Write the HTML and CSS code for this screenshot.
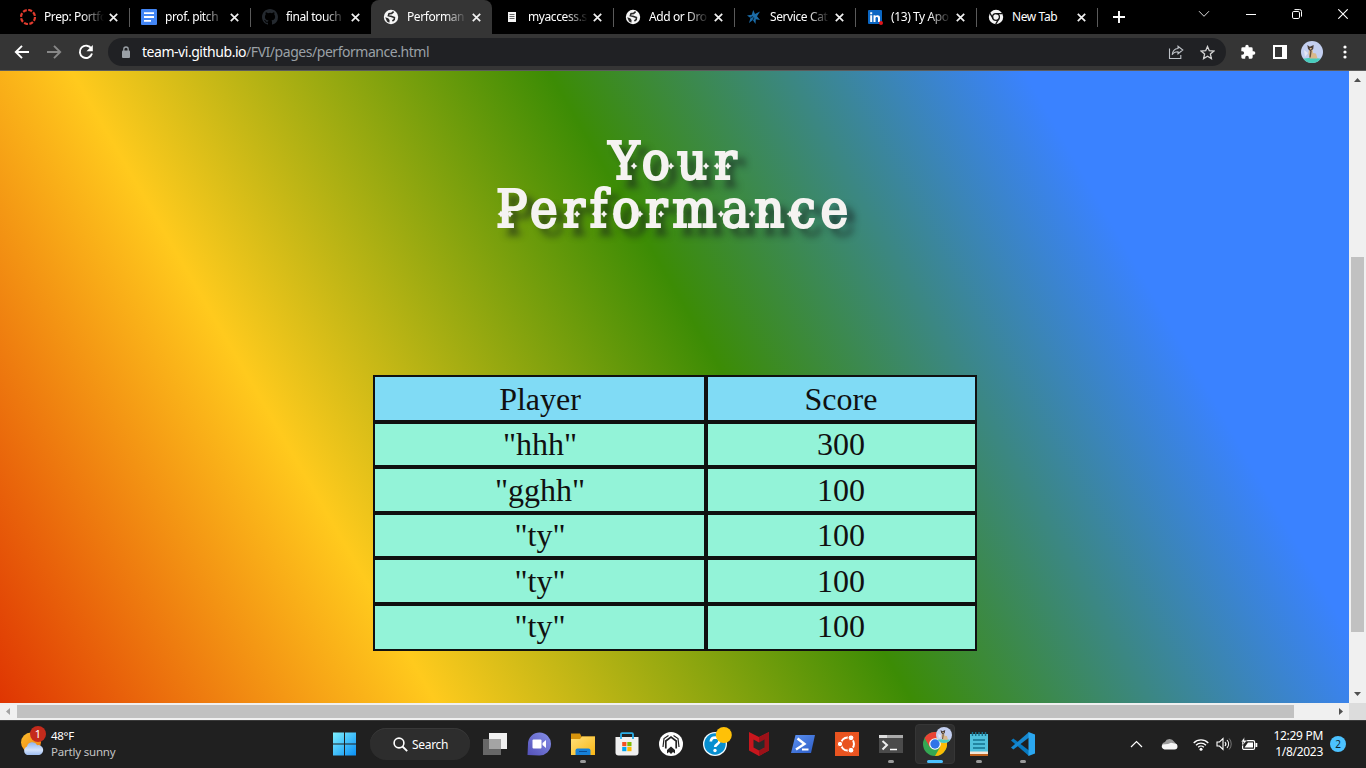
FILE: index.html
```html
<!DOCTYPE html>
<html lang="en">
<head>
<meta charset="utf-8">
<title>Performance</title>
<link rel="stylesheet" href="styles.css">
</head>
<body>
<svg class="defs" width="0" height="0">
  <defs>
    <linearGradient id="win" x1="0" y1="0" x2="1" y2="1"><stop offset="0" stop-color="#7df0fe"/><stop offset="1" stop-color="#0a8ff5"/></linearGradient>
    <linearGradient id="sun" x1="0" y1="0" x2="1" y2="1"><stop offset="0" stop-color="#fbc02d"/><stop offset="1" stop-color="#ef7a10"/></linearGradient>
    <linearGradient id="cloud" x1="0" y1="0" x2="0" y2="1"><stop offset="0" stop-color="#8fb4ee"/><stop offset=".6" stop-color="#d4e3fb"/><stop offset="1" stop-color="#9dbdf0"/></linearGradient>
    <linearGradient id="folder" x1="0" y1="0" x2="1" y2="1"><stop offset="0" stop-color="#ffe07a"/><stop offset="1" stop-color="#f9b615"/></linearGradient>
    <linearGradient id="chat" x1="1" y1="0" x2="0" y2="1"><stop offset="0" stop-color="#8690e8"/><stop offset="1" stop-color="#5350b8"/></linearGradient>
    <linearGradient id="ps" x1="0" y1="0" x2="1" y2="1"><stop offset="0" stop-color="#5d92f2"/><stop offset="1" stop-color="#2b5bc4"/></linearGradient>
    <symbol id="x" viewBox="0 0 9 9"><path d="M.8.8 8.2 8.2M8.2.8.8 8.2" stroke="#f1f1f1" stroke-width="1.7" fill="none"/></symbol>
    <symbol id="globe" viewBox="0 0 16 16"><circle cx="8" cy="8" r="7.2" fill="#f5f5f5"/><path d="M2.2 8.2 5.2 9.2 6.6 11 6.4 13.8 4 12.5Z" fill="#2a2a2a"/><path d="M10.6 2.6 8.6 4.4 6 4.8 5.4 6.6 8.6 7.4 11.4 8.6 11.2 10.6 9.4 12" stroke="#2a2a2a" stroke-width="1.6" fill="none"/></symbol>
    <symbol id="kanga" viewBox="0 0 22 22"><clipPath id="av"><circle cx="11" cy="11" r="11"/></clipPath><g clip-path="url(#av)"><path d="M0 0h22v22H0z" fill="#c3cff0"/><path d="M0 18 11 16.5 22 18v4H0z" fill="#48cdbd"/><path d="M3 9l4 3-3 4z" fill="#e4e8f5"/><path d="M8 8.5 11.5 8.5 12 12 15 12.5 16.5 17.5H9L7.5 13z" fill="#d9b98a"/><path d="M10 10 9 16.5" stroke="#68513e" stroke-width="1.4"/><path d="M6.3 4 8.8 5.7 12.7 4 12.2 8 9.6 10.2 7 8z" fill="#493e3a"/><path d="M8.5 7h2.5L9.8 9z" fill="#d8b98e"/></g></symbol>
    <path id="spur" d="M-3.500 0Q-1.200-.8 0-3.500 1.200-.8 3.500 0 1.200.8 0 3.500-1.200.8-3.500 0z"/>
  </defs>
</svg>

<header class="tabstrip">
  <div class="tab"><svg class="fav" viewBox="0 0 16 16"><circle cx="8" cy="8" r="7" fill="none" stroke="#e23b2e" stroke-width="2.2" stroke-dasharray="4 1.5"/></svg><span class="title">Prep: Portfo</span><svg class="close"><use href="#x"/></svg></div>
  <div class="tab"><svg class="fav" viewBox="0 0 16 16"><rect width="16" height="16" rx="1" fill="#4285f4"/><path d="M3 4.2h10M3 8h10M3 11.8h7" stroke="#fff" stroke-width="1.8"/></svg><span class="title">prof. pitch</span><svg class="close"><use href="#x"/></svg></div>
  <div class="tab no-sep"><svg class="fav" viewBox="0 0 16 16"><path fill="#24292f" d="M8 0C3.58 0 0 3.58 0 8c0 3.54 2.29 6.53 5.47 7.59.4.07.55-.17.55-.38 0-.19-.01-.82-.01-1.49-2.01.37-2.53-.49-2.69-.94-.09-.23-.48-.94-.82-1.13-.28-.15-.68-.52-.01-.53.63-.01 1.08.58 1.23.82.72 1.21 1.87.87 2.33.66.07-.52.28-.87.51-1.07-1.78-.2-3.64-.89-3.64-3.95 0-.87.31-1.59.82-2.15-.08-.2-.36-1.02.08-2.12 0 0 .67-.21 2.2.82a7.6 7.6 0 0 1 4 0c1.53-1.04 2.2-.82 2.2-.82.44 1.1.16 1.92.08 2.12.51.56.82 1.27.82 2.15 0 3.07-1.87 3.75-3.65 3.95.29.25.54.73.54 1.48 0 1.07-.01 1.93-.01 2.2 0 .21.15.46.55.38A8.01 8.01 0 0 0 16 8c0-4.42-3.58-8-8-8z"/></svg><span class="title">final touch</span><svg class="close"><use href="#x"/></svg></div>
  <div class="tab active no-sep"><svg class="fav"><use href="#globe"/></svg><span class="title">Performan</span><svg class="close"><use href="#x"/></svg></div>
  <div class="tab"><svg class="fav" viewBox="0 0 16 16"><path d="M4 3h8v10H4z" fill="#f4f4f4"/><path d="M5.5 5.5h5M5.5 7.5h5M5.5 9.5h5" stroke="#555" stroke-width=".9"/></svg><span class="title">myaccess.s</span><svg class="close"><use href="#x"/></svg></div>
  <div class="tab"><svg class="fav"><use href="#globe"/></svg><span class="title">Add or Dro</span><svg class="close"><use href="#x"/></svg></div>
  <div class="tab"><svg class="fav" viewBox="0 0 16 16"><path fill="#1b6ca8" d="M7.200 1 9 5 14 2.500 11 7.300 14 11 9.800 10.300 9.500 15 6.800 11 3 14 4.500 9 1 6.500 5.800 5.800z"/><path d="M7 7.500 4.500 8.700M8 8.500 7 11" stroke="#062b47" stroke-width="1.200"/></svg><span class="title">Service Cat</span><svg class="close"><use href="#x"/></svg></div>
  <div class="tab"><svg class="fav" viewBox="0 0 16 16"><rect x="1" y="1" width="14" height="14" rx="1" fill="#0a66c2"/><path d="M3.2 6.3h2V13h-2zM3.2 3.2h2v2h-2zM6.5 6.3h2v1c1-1.6 4.5-1.6 4.5 1.4V13h-2V9.4c0-2-2.5-2-2.5 0V13h-2z" fill="#fff"/><circle cx="14" cy="14" r="2" fill="#e0151b"/></svg><span class="title">(13) Ty Apo</span><svg class="close"><use href="#x"/></svg></div>
  <div class="tab"><svg class="fav" viewBox="0 0 16 16"><circle cx="8" cy="8" r="7.2" fill="#f5f5f5"/><circle cx="8" cy="8" r="3.4" fill="none" stroke="#111" stroke-width="1.3"/><path d="M8 4.6h6.3M5.1 9.7 1.9 4.2M10.9 9.7 7.7 15.2" stroke="#111" stroke-width="1.3"/></svg><span class="title">New Tab</span><svg class="close"><use href="#x"/></svg></div>
  <svg class="newtab" viewBox="0 0 12 12"><path d="M6 0v12M0 6h12" stroke="#fff" stroke-width="1.9"/></svg>
  <div class="winbtns">
    <svg width="12" height="8" viewBox="0 0 12 8"><path d="M1 1.2 6 6.3 11 1.2" stroke="#ddd" fill="none"/></svg>
    <svg width="10" height="10" viewBox="0 0 10 10"><path d="M0 5.5h10" stroke="#fff"/></svg>
    <svg width="10" height="10" viewBox="0 0 10 10"><rect x=".5" y="2.5" width="7" height="7" rx="1.3" stroke="#fff" fill="none"/><path d="M2.5.6h5.2q1.8 0 1.8 1.8v5.2" stroke="#fff" fill="none"/></svg>
    <svg width="10" height="10" viewBox="0 0 10 10"><path d="m.3.3 9.4 9.4M9.7.3.3 9.7" stroke="#fff" stroke-width="1.1"/></svg>
  </div>
</header>

<nav class="toolbar">
  <div class="navicons">
    <svg width="16" height="16" viewBox="0 0 16 16"><path d="M15 8H2.5M8 1.8 1.8 8 8 14.2" stroke="#fff" stroke-width="1.9" fill="none"/></svg>
    <svg width="16" height="16" viewBox="0 0 16 16"><path d="M1 8h12.5M8 1.8 14.2 8 8 14.2" stroke="#888" stroke-width="1.9" fill="none"/></svg>
    <svg width="16" height="16" viewBox="0 0 16 16"><path d="M13.4 4.7A6.2 6.2 0 1 0 14 9.6" stroke="#fff" stroke-width="1.9" fill="none"/><path d="M14.8 1v6.3H8.5z" fill="#fff"/></svg>
  </div>
  <div class="omnibox">
    <svg width="10" height="13" viewBox="0 0 10 13"><rect x="1" y="4.5" width="8" height="7.5" rx="1" fill="#9aa0a6"/><path d="M2.8 5V3.2a2.2 2.2 0 0 1 4.4 0V5" stroke="#9aa0a6" stroke-width="1.3" fill="none"/></svg>
    <span class="url"><b>team-vi.github.io</b>/FVI/pages/performance.html</span>
    <svg class="share" width="16" height="14" viewBox="0 0 16 14"><path d="M1.5 3.5v10h11.3V10M10 1.2 14.8 5 10 8.8V6.7C7.2 6.6 5.3 7.8 4.2 9.8c.3-3.5 2.4-6 5.8-6.3z" stroke="#bdc1c6" stroke-width="1.1" fill="none"/></svg>
    <svg width="15" height="15" viewBox="0 0 15 15"><path d="m7.5 1.5 1.8 4.2 4.6.4-3.5 3 1 4.5-3.9-2.4-3.9 2.4 1-4.5-3.5-3 4.6-.4z" stroke="#d5d5d5" stroke-width="1.3" fill="none"/></svg>
  </div>
  <svg class="puzzle" width="16" height="16" viewBox="0 0 24 24"><path fill="#fff" d="M20.5 11H19V7a2 2 0 0 0-2-2h-4V3.500a2.500 2.500 0 0 0-5 0V5H4a2 2 0 0 0-2 2v3.800h1.500a2.700 2.700 0 0 1 0 5.400H2V20a2 2 0 0 0 2 2h3.800v-1.500a2.700 2.700 0 0 1 5.400 0V22H17a2 2 0 0 0 2-2v-4h1.500a2.500 2.500 0 0 0 0-5z"/></svg>
  <svg class="panel" width="14" height="14" viewBox="0 0 14 14"><path fill="#fff" fill-rule="evenodd" d="M0 0h14v14H0zM2 2v10h7V2z"/></svg>
  <svg class="avatar" width="22" height="22"><use href="#kanga"/></svg>
  <svg class="dots" width="4" height="14" viewBox="0 0 4 14"><circle cx="2" cy="2" r="1.6" fill="#fff"/><circle cx="2" cy="7" r="1.6" fill="#fff"/><circle cx="2" cy="12" r="1.6" fill="#fff"/></svg>
</nav>

<main class="viewport">
  <section class="page">
    <h1><span class="your">Your</span><br>Performance
      <svg class="spurs" width="370" height="110" viewBox="0 0 370 110"><g fill="#f5f3f1">
        <use href="#spur" x="132" y="35"/><use href="#spur" x="144" y="35"/><use href="#spur" x="157" y="35"/><use href="#spur" x="181" y="35"/><use href="#spur" x="193" y="35"/><use href="#spur" x="216" y="35"/><use href="#spur" x="227" y="35"/><use href="#spur" x="238" y="35"/>
        <use href="#spur" x="11" y="83"/><use href="#spur" x="20" y="83"/><use href="#spur" x="45" y="83"/><use href="#spur" x="77" y="83"/><use href="#spur" x="87" y="83"/><use href="#spur" x="105" y="83"/><use href="#spur" x="114" y="83"/><use href="#spur" x="126" y="83"/><use href="#spur" x="150" y="83"/><use href="#spur" x="162" y="83"/><use href="#spur" x="171" y="83"/><use href="#spur" x="190" y="83"/><use href="#spur" x="231" y="83"/><use href="#spur" x="262" y="83"/><use href="#spur" x="275" y="83"/><use href="#spur" x="300" y="83"/><use href="#spur" x="309" y="83"/><use href="#spur" x="338" y="83"/>
      </g></svg>
    </h1>
    <table>
      <tr class="head"><td class="player">Player</td><td>Score</td></tr>
      <tr class="r45"><td>"hhh"</td><td>300</td></tr>
      <tr class="r46"><td>"gghh"</td><td>100</td></tr>
      <tr class="r45"><td>"ty"</td><td>100</td></tr>
      <tr class="r46"><td>"ty"</td><td>100</td></tr>
      <tr class="r47"><td>"ty"</td><td>100</td></tr>
    </table>
  </section>
  <aside class="vbar">
    <svg width="17" height="17" viewBox="0 0 17 17"><path d="M5 11h7L8.500 7z" fill="#505050"/></svg>
    <div class="vthumb"></div>
    <svg class="end" width="17" height="17" viewBox="0 0 17 17"><path d="M5 6h7l-3.500 4z" fill="#505050"/></svg>
  </aside>
  <div class="hbar">
    <svg width="17" height="17" viewBox="0 0 17 17"><path d="M10 5v7L6 8.500z" fill="#a3a3a3"/></svg>
    <div class="hthumb"></div>
    <svg class="hend" width="17" height="17" viewBox="0 0 17 17"><path d="M7 5v7l4-3.500z" fill="#505050"/></svg>
  </div>
  <div class="corner"></div>
</main>

<footer class="taskbar">
  <div class="weather">
    <svg width="28" height="32" viewBox="0 0 28 32"><circle cx="11" cy="16.500" r="10" fill="url(#sun)"/><path d="M7 29a4.600 4.600 0 0 1 0-8.500 5.500 5.500 0 0 1 10.200-1.300 4.600 4.600 0 0 1 2 9.800z" fill="url(#cloud)"/><circle cx="18" cy="8" r="8" fill="#c42b1c"/></svg>
    <span class="count">1</span>
    <p>48°F<br><span>Partly sunny</span></p>
  </div>
  <svg class="start" width="24" height="24" viewBox="0 0 24 24"><path fill="url(#win)" d="M1 .5h11v11H1zM13 .5h11v11H13zM1 12.500h11v11H1zM13 12.500h11v11H13z"/></svg>
  <div class="search"><svg width="15" height="15" viewBox="0 0 15 15"><circle cx="6" cy="6" r="4.900" stroke="#fff" stroke-width="1.600" fill="none"/><path d="m9.500 9.500 4.700 4.700" stroke="#fff" stroke-width="1.800"/></svg>Search</div>
  <div class="apps">
    <div class="app"><svg viewBox="0 0 24 24"><path d="M6 1h18v16H6z" fill="#f0f0f0"/><path d="M0 7h18v16H0z" fill="#676767"/><path d="M6 7h12v10H6z" fill="#a4a4a4"/></svg></div>
    <div class="app"><svg viewBox="0 0 24 24"><path d="M.5 23 1 12A11.500 11.500 0 1 1 12 23.500z" fill="url(#chat)"/><rect x="5.500" y="7.500" width="9" height="9" rx="1" fill="#fff"/><path d="m15.500 11 3.500-3v8l-3.500-3z" fill="#fff"/></svg></div>
    <div class="app run"><svg viewBox="0 0 24 24"><path d="M0 1.500h9l1.500 3H24v5H0z" fill="#d6930c"/><path d="M0 7h9l2-2.500h13V23H0z" fill="url(#folder)"/><path d="M4.500 23v-4.500q0-2 2-2h11q2 0 2 2V23z" fill="#1680d8"/><path d="M8 19.500h8" stroke="#0a4c94"/></svg></div>
    <div class="app"><svg viewBox="0 0 24 24"><path d="M.5 5h23v15.500q0 3-3 3h-17q-3 0-3-3z" fill="#f0f0f0"/><path d="M6 7V2.200q0-1 1-1h10q1 0 1 1V7" stroke="#2aaee8" stroke-width="1.800" fill="none"/><path d="M7.200 10h4.200v4.200H7.200z" fill="#f25022"/><path d="M12.300 10h4.200v4.200h-4.200z" fill="#7fba00"/><path d="M7.200 15h4.200v4.200H7.200z" fill="#00a4ef"/><path d="M12.300 15h4.200v4.200h-4.200z" fill="#ffb900"/></svg></div>
    <div class="app"><svg viewBox="0 0 24 24"><circle cx="12" cy="12" r="12" fill="#fff"/><path d="M9.500 3.500 5 6.500 4 15M14.500 3.500l4.500 3 1 8.500" stroke="#222" stroke-width="1.200" fill="none"/><path d="M6.800 16.500V9L12 5l5.200 4v7.500" stroke="#222" stroke-width="1.700" fill="none"/><path d="M8 21.500V18l4-3.500 4 3.500v3.500l-2-1.500-2 2-2-2z" fill="#222"/></svg></div>
    <div class="app"><svg class="wide" viewBox="0 0 29 29"><circle cx="12" cy="17" r="12" fill="#f3fbff"/><circle cx="12" cy="17" r="10.700" fill="#078fd0"/><path d="M7.800 14.500q.3-4 4.400-4 4.500.2 4.300 3.500-.1 2-2.500 3.400-1.800 1-1.800 2.600" stroke="#fff" stroke-width="2.700" fill="none"/><circle cx="12" cy="23.500" r="1.700" fill="#fff"/><circle cx="20.800" cy="8" r="8" fill="#ffc107"/></svg></div>
    <div class="app"><svg viewBox="0 0 24 24"><path d="m2 0 10 5 10-5V18.500l-10 5.500L2 18.500z" fill="#c8161d"/><path d="M22 0v18.500L12 24v-5.500l5-2.500V8l-5 2.800V5z" fill="#9c1118"/><path d="m6.500 7.500 5.500 3 5.500-3v8l-5.500 3-5.500-3z" fill="#292929"/></svg></div>
    <div class="app"><svg viewBox="0 0 24 24"><path d="M4.500 3H24l-4 18H0z" fill="url(#ps)"/><path d="m6.500 6.500 7 5.500L5 17.500" stroke="#fff" stroke-width="2.400" fill="none"/><path d="M11 17.500h6.500" stroke="#fff" stroke-width="2"/></svg></div>
    <div class="app"><svg viewBox="0 0 24 24"><path d="M0 0h24v24H0z" fill="#e95420"/><circle cx="12.500" cy="12" r="6.500" fill="none" stroke="#fff" stroke-width="2"/><g fill="#fff" stroke="#e95420"><circle cx="5" cy="12" r="2.700"/><circle cx="16" cy="5.800" r="2.900"/><circle cx="16" cy="18.200" r="2.900"/></g></svg></div>
    <div class="app run"><svg viewBox="0 0 24 24"><path d="M0 3h24v18H0z" fill="#4b4b4b"/><path d="M0 3h24v3H0z" fill="#aaa"/><path d="M0 3h8v3H0z" fill="#ddd"/><path d="m3.500 9 4.500 4-4.500 4.500" stroke="#eee" stroke-width="2" fill="none"/><path d="M11 17.500h7" stroke="#fff" stroke-width="1.500"/></svg></div>
    <div class="app current"><svg viewBox="0 0 24 24"><circle cx="12" cy="12" r="12" fill="#34a853"/><path d="M12 12 1.600 6A12 12 0 0 1 22.400 6z" fill="#ea4335"/><path d="M12 6h10.400A12 12 0 0 1 12 24l5.200-9z" fill="#fbbc05"/><path d="M1.600 6 6.800 15 12 6z" fill="#ea4335"/><circle cx="12" cy="12" r="5.800" fill="#fff"/><circle cx="12" cy="12" r="4.700" fill="#2f75e8"/></svg><svg class="badge"><use href="#kanga"/></svg></div>
    <div class="app run"><svg viewBox="0 0 24 24"><path d="M3 2h18v19H3z" fill="#50c0dc"/><path d="M3 19.500h18V22H3z" fill="#f3e6d8"/><path d="M3 22h18v2H3z" fill="#bd601c"/><path d="M6 8h12M6 12h12M6 16h12" stroke="#14718e" stroke-width="1.400"/><path d="M5.500 0v4M8.700 0v4M12 0v4M15.300 0v4M18.500 0v4" stroke="#176f8b" stroke-width="1.400"/></svg></div>
    <div class="app run"><svg viewBox="0 0 24 24"><path d="M0 8.500 2.300 6.500 18 18.500V24z" fill="#0879bf"/><path d="M0 15.500 2.300 17.500 18 5.500V0z" fill="#1688d0"/><path d="m17.500 0 6.500 2.500v19L17.500 24z" fill="#2ba7f0"/></svg></div>
  </div>
  <div class="tray">
    <svg width="13" height="8" viewBox="0 0 13 8"><path d="m1 7 5.500-5.500L12 7" stroke="#fff" stroke-width="1.200" fill="none"/></svg>
    <svg class="od" width="17" height="12" viewBox="0 0 17 12"><path d="M1 7a3.500 3.500 0 0 1 3-3 5 5 0 0 1 9-.5l3 3.500-8 3z" fill="#9b9b9b"/><path d="M3.500 11.500a3 3 0 0 1-2-5L7 6l3-1.200 3.500.7a3 3 0 0 1 0 6z" fill="#f5f5f5"/></svg>
    <svg class="wifi" width="16" height="13" viewBox="0 0 16 13"><path d="M.7 5a10.300 10.300 0 0 1 14.600 0M3 7.300a7 7 0 0 1 10 0M5.200 9.300a4 4 0 0 1 5.600 0" stroke="#fff" stroke-width="1.300" fill="none"/><circle cx="8" cy="11.200" r="1.500" fill="#fff"/></svg>
    <svg class="vol" width="16" height="14" viewBox="0 0 16 14"><path d="M1 5h2.500l3.500-3.500v11L3.500 9H1z" stroke="#fff" stroke-width="1.100" fill="none"/><path d="M9 5a3 3 0 0 1 0 4M11 3a6 6 0 0 1 0 8" stroke="#fff" stroke-width="1.100" fill="none"/><path d="M13.200 1.500a8.500 8.500 0 0 1 0 11" stroke="#777" fill="none"/></svg>
    <svg class="bat" width="17" height="14" viewBox="0 0 17 14"><rect x="1.600" y="3.600" width="12" height="8.800" rx="1.500" stroke="#fff" stroke-width="1.200" fill="none"/><path d="M3.500 10.500 7 5.500h5v5zM14.500 6h1.800v4h-1.800z" fill="#fff"/><path d="M3.500 0 0 5h2.500L1.500 8.500 6 3.500H3.500z" fill="#fff" stroke="#202020" stroke-width=".5"/></svg>
    <p class="clock">12:29 PM<br>1/8/2023</p>
    <span class="notif">2</span>
  </div>
</footer>
</body>
</html>
```
FILE: styles.css
```css
* { box-sizing: border-box; }
body { margin: 0; width: 1366px; height: 768px; overflow: hidden; display: flex; flex-direction: column; background: #000; font-family: "Noto Sans", "Open Sans", sans-serif; }
svg { display: block; flex: none; }
.defs { position: absolute; }

.tabstrip { display: flex; height: 34px; padding-left: 8px; background: #000; flex: none; }
.tab { position: relative; display: flex; align-items: center; width: 121px; flex: none; padding-left: 12px; color: #fff; font-size: 12px; }
.tab::after { content: ""; position: absolute; right: -1px; top: 8px; width: 1px; height: 19px; background: #5a5a5a; }
.tab.no-sep::after { display: none; }
.tab.active { background: #353535; border-radius: 8px 8px 0 0; }
.fav { width: 16px; height: 16px; }
.title { width: 60px; margin-left: 8px; white-space: nowrap; letter-spacing: -0.4px; line-height: 18px; -webkit-mask-image: linear-gradient(90deg, #000 38px, transparent 60px); mask-image: linear-gradient(90deg, #000 38px, transparent 60px); }
.tab:nth-child(9) .title { -webkit-mask-image: none; mask-image: none; }
.close { width: 9px; height: 9px; margin-left: 5px; }
.newtab { width: 12px; height: 12px; margin: 11px 0 0 16px; }
.winbtns { display: flex; align-items: center; gap: 36px; height: 28px; margin-left: 73px; }

.toolbar { display: flex; align-items: center; height: 37px; flex: none; background: #353535; border-bottom: 1px solid #5c5c5c; padding-left: 14px; }
.navicons { display: flex; gap: 16px; width: 94px; }
.omnibox { display: flex; align-items: center; width: 1118px; height: 28px; border-radius: 14px; background: #202124; padding: 0 11px 0 13px; }
.url { margin-left: 11px; color: #9aa0a6; font-size: 14px; line-height: 20px; letter-spacing: -0.46px; white-space: nowrap; }
.url b { font-weight: 400; color: #fff; }
.share { margin-left: auto; margin-right: 16px; }
.puzzle { margin-left: 14px; }
.panel { margin-left: 17px; }
.avatar { margin-left: 14px; }
.dots { margin-left: 20px; }

.viewport { display: grid; grid-template-columns: 1349px 17px; grid-template-rows: 632px 17px; height: 649px; flex: none; background: #f0f0f0; }
.page { display: flex; flex-direction: column; align-items: center; background: linear-gradient(60deg, #dc2800 -34px, #ffca1d 378px, #3c8c05 791px, #3a82ff 1203px); }
h1 { position: relative; width: 370px; margin: 66px 0 0; height: 238px; color: #f5f3f1; font: 400 52px/48px "DejaVu Serif Condensed", "DejaVu Serif", serif; font-stretch: condensed; letter-spacing: 4.9px; text-indent: 3px; text-align: center; white-space: nowrap; -webkit-text-stroke: 2.2px #f5f3f1; text-shadow: 8px 8px 7px rgba(20, 25, 30, .8); }
.your { letter-spacing: 7px; }
.spurs { position: absolute; left: 0; top: -6px; }
table { width: 604px; border-collapse: separate; border-spacing: 0; table-layout: fixed; font: 32px/35px "Liberation Serif", serif; color: #101010; text-align: center; margin-left: 1px; }
td { border: 2px solid #101010; padding: 0; background: #93f3d8; }
td:first-child { padding-left: 1px; }
td:last-child { padding-right: 1px; }
.player { width: 333px; }
.head td { background: #80dbf5; height: 47px; padding-top: 2px; }
.r45 td { height: 45px; }
.r46 td { height: 46px; }
.r47 td { height: 47px; padding-bottom: 2px; }
.vbar { display: flex; flex-direction: column; align-items: center; }
.vthumb { width: 13px; height: 375px; margin-top: 169px; background: #c1c1c1; }
.end { margin-top: auto; }
.hbar { display: flex; align-items: center; }
.hthumb { width: 1277px; height: 13px; background: #c1c1c1; }
.hend { margin-left: auto; }
.corner { background: #dcdcdc; }

.taskbar { position: relative; display: flex; align-items: center; height: 48px; flex: none; background: #202020; box-shadow: inset 0 1px #3a3a3a; color: #fff; font-size: 12px; padding-left: 20px; }
.weather { position: relative; display: flex; width: 312px; height: 42px; }
.weather svg { margin-top: 3px; }
.count { position: absolute; left: 14px; top: 3px; width: 8px; text-align: center; font-size: 11px; line-height: 16px; }
.weather p { margin: 5px 0 0 3px; font-size: 11.500px; line-height: 16px; letter-spacing: -0.3px; }
.weather p span { color: #c4c4c4; letter-spacing: -0.2px; }
.search { display: flex; align-items: center; gap: 4px; width: 100px; height: 32px; margin-left: 14px; padding-left: 23px; border-radius: 16px; background: #2d2d2d; box-shadow: inset 0 1px #383838; letter-spacing: -0.3px; }
.apps { display: flex; gap: 4px; margin-left: 5px; }
.app { position: relative; display: flex; align-items: center; justify-content: center; width: 40px; height: 40px; border-radius: 4px; }
.app svg { width: 24px; height: 24px; }
.app .wide { width: 29px; height: 29px; margin: -5px 0 0 5px; }
.app.run::after, .app.current::after { content: ""; position: absolute; left: 17px; bottom: 1px; width: 6px; height: 3px; border-radius: 2px; background: #9a9a9a; }
.app.current { background: #2e2e2e; border: 1px solid #363636; }
.app.current::after { left: 11px; bottom: 0; width: 16px; background: #4cc2ff; }
.app .badge { position: absolute; right: 2px; top: 2px; width: 16px; height: 16px; }
.tray { display: flex; align-items: center; margin-left: 87px; }
.od { margin-left: 18px; }
.wifi { margin-left: 15px; }
.vol { margin-left: 7px; }
.bat { margin-left: 9px; }
.clock { margin: 0; width: 65px; text-align: right; font-size: 12px; line-height: 16px; letter-spacing: -0.3px; }
.notif { width: 16px; height: 16px; margin-left: 7px; border-radius: 8px; background: #4cc2ff; color: #10232e; font-size: 10px; line-height: 16px; text-align: center; }
```
